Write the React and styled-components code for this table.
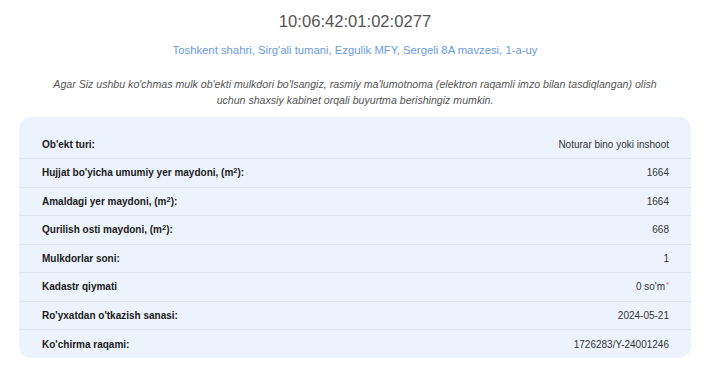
import styled, { createGlobalStyle } from 'styled-components';

const GlobalStyle = createGlobalStyle`
    body {
        margin: 0;
        background: #fff;
        font-family: "Liberation Sans", Arial, sans-serif;
    }
`

const App = () => {

    const rows = [
        { label: "Ob'ekt turi:", value: 'Noturar bino yoki inshoot' },
        { label: <>Hujjat bo'yicha umumiy yer maydoni, (m<sup>2</sup>):</>, value: '1664' },
        { label: <>Amaldagi yer maydoni, (m<sup>2</sup>):</>, value: '1664' },
        { label: <>Qurilish osti maydoni, (m<sup>2</sup>):</>, value: '668' },
        { label: 'Mulkdorlar soni:', value: '1' },
        { label: 'Kadastr qiymati', value: <>0 so'm<Star>*</Star></> },
        { label: "Ro'yxatdan o'tkazish sanasi:", value: '2024-05-21' },
        { label: "Ko'chirma raqami:", value: '1726283/Y-24001246' },
    ];

    return (
        <>
            <GlobalStyle />
            <Page>
                <Title>10:06:42:01:02:0277</Title>
                <Address href="#">Toshkent shahri, Sirg'ali tumani, Ezgulik MFY, Sergeli 8A mavzesi, 1-a-uy</Address>
                <Notice>
                    Agar Siz ushbu ko'chmas mulk ob'ekti mulkdori bo'lsangiz, rasmiy ma'lumotnoma (elektron raqamli imzo bilan tasdiqlangan) olish
                    <br />
                    uchun shaxsiy kabinet orqali buyurtma berishingiz mumkin.
                </Notice>
                <Card>
                    {rows.map((row, i) => (
                        <Row key={i}>
                            <Label>{row.label}</Label>
                            <Value>{row.value}</Value>
                        </Row>
                    ))}
                </Card>
            </Page>
        </>
    )
};

const Page = styled.main`
    width: 710px;
    display: flex;
    flex-direction: column;
    align-items: center;
`

const Title = styled.h1`
    margin: 12px 0 0;
    font-size: 16.6px;
    line-height: 20px;
    font-weight: normal;
    color: #555;
`

const Address = styled.a`
    margin-top: 10px;
    font-size: 11.3px;
    line-height: 16px;
    color: #6a9be0;
    text-decoration: none;
`

const Notice = styled.p`
    margin: 18px 0 0;
    font-size: 10.6px;
    line-height: 16px;
    font-style: italic;
    color: #555;
    text-align: center;
`

const Card = styled.section`
    align-self: stretch;
    margin: 9px 19px 0;
    padding: 13.5px 22px 0 23px;
    background: #edf3fd;
    border-radius: 12px;
`

const Row = styled.div`
    display: flex;
    justify-content: space-between;
    align-items: center;
    height: 28.5px;
    box-sizing: border-box;
    font-size: 10px;
    border-bottom: 1px solid #dbe3ee;
    margin: 0 -22px 0 -23px;
    padding: 0 22px 0 23px;

    &:last-child {
        border-bottom: none;
        height: 28px;
    }

    sup {
        font-size: 7.5px;
        line-height: 0;
        vertical-align: 3px;
    }
`

const Label = styled.span`
    font-weight: bold;
    color: #1a1a1a;
`

const Value = styled.span`
    color: #333;
`

const Star = styled.sup`
    color: #e0607a;
    margin-left: 1px;
`

export default App;
